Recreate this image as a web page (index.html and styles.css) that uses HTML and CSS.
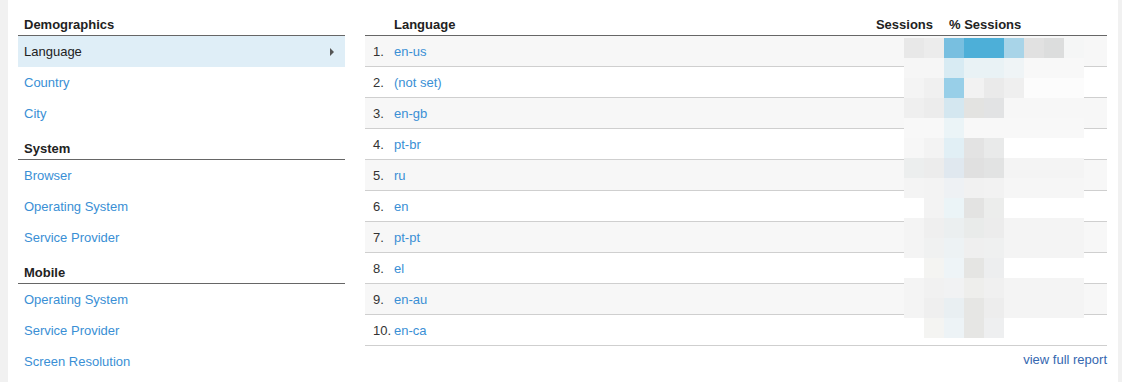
FILE: index.html
```html
<!DOCTYPE html>
<html>
<head>
<meta charset="utf-8">
<link rel="stylesheet" href="styles.css">
</head>
<body>
<div class="panel">
  <nav class="nav">
    <div class="nav-head">Demographics</div>
    <div class="nav-item active"><span>Language</span><span class="arrow"></span></div>
    <div class="nav-item"><a>Country</a></div>
    <div class="nav-item"><a>City</a></div>
    <div class="nav-head">System</div>
    <div class="nav-item"><a>Browser</a></div>
    <div class="nav-item"><a>Operating System</a></div>
    <div class="nav-item"><a>Service Provider</a></div>
    <div class="nav-head">Mobile</div>
    <div class="nav-item"><a>Operating System</a></div>
    <div class="nav-item"><a>Service Provider</a></div>
    <div class="nav-item"><a>Screen Resolution</a></div>
  </nav>
  <section class="report">
    <div class="table">
      <div class="thead">
        <span class="c-num"></span>
        <span class="c-name">Language</span>
        <span class="c-sess">Sessions</span>
        <span class="c-pct">% Sessions</span>
      </div>
      <div class="row"><span class="c-num">1.</span><a class="c-name">en-us</a></div>
      <div class="row"><span class="c-num">2.</span><a class="c-name">(not set)</a></div>
      <div class="row"><span class="c-num">3.</span><a class="c-name">en-gb</a></div>
      <div class="row"><span class="c-num">4.</span><a class="c-name">pt-br</a></div>
      <div class="row"><span class="c-num">5.</span><a class="c-name">ru</a></div>
      <div class="row"><span class="c-num">6.</span><a class="c-name">en</a></div>
      <div class="row"><span class="c-num">7.</span><a class="c-name">pt-pt</a></div>
      <div class="row"><span class="c-num">8.</span><a class="c-name">el</a></div>
      <div class="row"><span class="c-num">9.</span><a class="c-name">en-au</a></div>
      <div class="row"><span class="c-num">10.</span><a class="c-name">en-ca</a></div>
      <svg class="mosaic" width="180" height="300" viewBox="0 0 180 300" shape-rendering="crispEdges">
        <g>
          <rect x="0" y="0" width="20" height="20" fill="#e8e8e8"/><rect x="20" y="0" width="20" height="20" fill="#ececec"/><rect x="40" y="0" width="20" height="20" fill="#78bfe0"/><rect x="60" y="0" width="40" height="20" fill="#4dafd8"/><rect x="100" y="0" width="20" height="20" fill="#a8d4e8"/><rect x="120" y="0" width="20" height="20" fill="#e1e1e1"/><rect x="140" y="0" width="20" height="20" fill="#dcdddd"/><rect x="160" y="0" width="20" height="20" fill="#f5f6f6"/>
          <rect x="0" y="20" width="40" height="20" fill="#f6f6f6"/><rect x="40" y="20" width="20" height="20" fill="#d8ebf3"/><rect x="60" y="20" width="40" height="20" fill="#e9f2f5"/><rect x="100" y="20" width="20" height="20" fill="#eff4f6"/><rect x="120" y="20" width="60" height="20" fill="#f8f8f8"/>
          <rect x="0" y="40" width="20" height="20" fill="#f4f4f4"/><rect x="20" y="40" width="20" height="20" fill="#f0f0f0"/><rect x="40" y="40" width="20" height="20" fill="#98cfe8"/><rect x="60" y="40" width="20" height="20" fill="#f2f2f2"/><rect x="80" y="40" width="20" height="20" fill="#eaeaea"/><rect x="100" y="40" width="20" height="20" fill="#efefef"/><rect x="120" y="40" width="60" height="20" fill="#fcfcfc"/>
          <rect x="0" y="60" width="20" height="20" fill="#efefef"/><rect x="20" y="60" width="20" height="20" fill="#ececec"/><rect x="40" y="60" width="20" height="20" fill="#d4e7f0"/><rect x="60" y="60" width="20" height="20" fill="#e3e3e1"/><rect x="80" y="60" width="20" height="20" fill="#e2e3e4"/><rect x="100" y="60" width="80" height="20" fill="#f7f7f7"/>
          <rect x="0" y="80" width="40" height="20" fill="#f8f8f8"/><rect x="40" y="80" width="20" height="20" fill="#ebf4f7"/><rect x="60" y="80" width="120" height="20" fill="#f8f8f8"/>
          <rect x="0" y="100" width="20" height="20" fill="#f7f7f7"/><rect x="20" y="100" width="20" height="20" fill="#f3f3f3"/><rect x="40" y="100" width="20" height="20" fill="#e1eff5"/><rect x="60" y="100" width="20" height="20" fill="#e3e3e3"/><rect x="80" y="100" width="20" height="20" fill="#e9eaea"/><rect x="100" y="100" width="80" height="20" fill="#ffffff"/>
          <rect x="0" y="120" width="20" height="20" fill="#eceeee"/><rect x="20" y="120" width="20" height="20" fill="#ececec"/><rect x="40" y="120" width="20" height="20" fill="#e0e8ef"/><rect x="60" y="120" width="20" height="20" fill="#e0e0e0"/><rect x="80" y="120" width="20" height="20" fill="#e2e3e3"/><rect x="100" y="120" width="80" height="20" fill="#f4f4f4"/>
          <rect x="0" y="140" width="20" height="20" fill="#f4f4f4"/><rect x="20" y="140" width="20" height="20" fill="#f3f3f3"/><rect x="40" y="140" width="20" height="20" fill="#eef1f4"/><rect x="60" y="140" width="20" height="20" fill="#f1f1f1"/><rect x="80" y="140" width="20" height="20" fill="#f2f2f2"/><rect x="100" y="140" width="80" height="20" fill="#f6f6f6"/>
          <rect x="0" y="160" width="20" height="20" fill="#ffffff"/><rect x="20" y="160" width="20" height="20" fill="#f3f3f3"/><rect x="40" y="160" width="20" height="20" fill="#ebf4f7"/><rect x="60" y="160" width="20" height="20" fill="#e3e3e2"/><rect x="80" y="160" width="20" height="20" fill="#ecedec"/><rect x="100" y="160" width="80" height="20" fill="#ffffff"/>
          <rect x="0" y="180" width="20" height="20" fill="#f4f4f4"/><rect x="20" y="180" width="20" height="20" fill="#efefef"/><rect x="40" y="180" width="20" height="20" fill="#ebeff0"/><rect x="60" y="180" width="20" height="20" fill="#e9ebea"/><rect x="80" y="180" width="20" height="20" fill="#ececec"/><rect x="100" y="180" width="80" height="20" fill="#f4f4f4"/>
          <rect x="0" y="200" width="20" height="20" fill="#f4f4f4"/><rect x="20" y="200" width="20" height="20" fill="#f0f1f1"/><rect x="40" y="200" width="20" height="20" fill="#edf2f4"/><rect x="60" y="200" width="20" height="20" fill="#efefef"/><rect x="80" y="200" width="20" height="20" fill="#eff0f0"/><rect x="100" y="200" width="80" height="20" fill="#f4f4f4"/>
          <rect x="0" y="220" width="20" height="20" fill="#ffffff"/><rect x="20" y="220" width="20" height="20" fill="#f4f4f2"/><rect x="40" y="220" width="20" height="20" fill="#eef4f7"/><rect x="60" y="220" width="20" height="20" fill="#e5e5e3"/><rect x="80" y="220" width="20" height="20" fill="#edeeef"/><rect x="100" y="220" width="80" height="20" fill="#ffffff"/>
          <rect x="0" y="240" width="20" height="20" fill="#f4f4f4"/><rect x="20" y="240" width="20" height="20" fill="#f1f1f1"/><rect x="40" y="240" width="20" height="20" fill="#f1f2f3"/><rect x="60" y="240" width="20" height="20" fill="#eeeeec"/><rect x="80" y="240" width="20" height="20" fill="#f0f0f0"/><rect x="100" y="240" width="80" height="20" fill="#f4f4f4"/>
          <rect x="0" y="260" width="20" height="20" fill="#f4f4f4"/><rect x="20" y="260" width="20" height="20" fill="#efefef"/><rect x="40" y="260" width="20" height="20" fill="#e9eff2"/><rect x="60" y="260" width="20" height="20" fill="#e6e6e4"/><rect x="80" y="260" width="20" height="20" fill="#ededed"/><rect x="100" y="260" width="80" height="20" fill="#f4f4f4"/>
          <rect x="0" y="280" width="20" height="20" fill="#ffffff"/><rect x="20" y="280" width="20" height="20" fill="#f4f4f2"/><rect x="40" y="280" width="20" height="20" fill="#edf3f6"/><rect x="60" y="280" width="20" height="20" fill="#e6e6e4"/><rect x="80" y="280" width="20" height="20" fill="#eeeff0"/><rect x="100" y="280" width="80" height="20" fill="#ffffff"/>
        </g>
      </svg>
    </div>
    <div class="foot"><a class="full">view full report</a></div>
  </section>
</div>
</body>
</html>
```
FILE: styles.css
```css
html, body {
  margin: 0;
  padding: 0;
  background: #f1f1f1;
  font-family: "Liberation Sans", Arial, sans-serif;
  font-size: 13px;
  color: #333;
}
a { color: #3a8fd5; text-decoration: none; }

.panel {
  margin: 0 4px 0 8px;
  background: #fff;
  min-height: 382px;
  box-sizing: border-box;
  padding: 5px 11px 0 10px;
  display: flex;
  gap: 20px;
}

.nav { width: 327px; flex: none; }
.nav-head {
  padding: 11px 6px 2px;
  line-height: 17px;
  font-weight: bold;
  color: #222;
  border-bottom: 1px solid #666;
}
.nav-item {
  height: 31px;
  line-height: 31px;
  padding: 0 11px 0 6px;
  display: flex;
  justify-content: space-between;
  align-items: center;
}
.nav-item.active { background: #dfeef7; color: #222; }
.arrow {
  width: 0;
  height: 0;
  border-left: 4px solid #555;
  border-top: 4px solid transparent;
  border-bottom: 4px solid transparent;
}

.report { flex: 1; min-width: 0; }
.table { position: relative; }
.thead, .row { display: flex; }
.thead {
  padding-top: 11px;
  padding-bottom: 2px;
  line-height: 17px;
  font-weight: bold;
  color: #222;
  border-bottom: 1px solid #666;
}
.row {
  height: 30px;
  line-height: 31px;
  border-bottom: 1px solid #cfcfcf;
}
.row:nth-child(even) { background: #f7f7f7; }
.c-num { width: 21px; padding-left: 8px; flex: none; color: #333; }
.c-name { flex: 1; }
.c-sess { width: 80px; text-align: right; flex: none; }
.c-pct { width: 158px; padding-left: 16px; flex: none; }

.mosaic {
  position: absolute;
  left: 539px;
  top: 33px;
  display: block;
}

.foot {
  text-align: right;
  padding-top: 6px;
  line-height: 16px;
}
.full { color: #3567b0; }
```
